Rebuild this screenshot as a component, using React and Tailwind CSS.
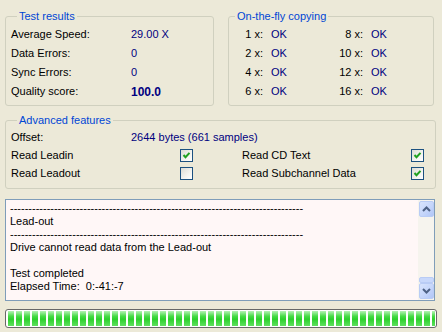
import React from 'react';

const Check = ({ checked }) => (
  <div className="w-[13px] h-[13px] border border-[#1C5180] bg-[linear-gradient(135deg,#DCDCD5_0%,#F4F4F0_60%,#FFFFFF_100%)] flex items-center justify-center">
    {checked && (
      <svg width="9" height="9" viewBox="0 0 9 9">
        <path d="M1.5 4 L3.5 6.2 L7.5 1.8" fill="none" stroke="#21A121" strokeWidth="2" />
      </svg>
    )}
  </div>
);

const GroupBox = ({ title, className, children }) => (
  <fieldset className={`border border-[#D0D0BF] rounded-[3px] ${className}`}>
    <legend className="ml-[6px] px-[2px] text-[#0046D5] leading-[13px]">{title}</legend>
    {children}
  </fieldset>
);

const ScrollBtn = ({ up }) => (
  <div className="w-[15px] h-[16px] rounded-[2px] border border-[#B9CCF5] bg-[linear-gradient(135deg,#D8E4FD_0%,#C3D4FA_60%,#B0C6F7_100%)] flex items-center justify-center">
    <svg width="9" height="6" viewBox="0 0 9 6">
      <path d={up ? 'M1 5 L4.5 1.5 L8 5' : 'M1 1 L4.5 4.5 L8 1'} fill="none" stroke="#4D6185" strokeWidth="2" />
    </svg>
  </div>
);

export default function App() {
  const speeds = [['1', '8'], ['2', '10'], ['4', '12'], ['6', '16']];
  const results = [
    ['Average Speed:', '29.00 X', false],
    ['Data Errors:', '0', false],
    ['Sync Errors:', '0', false],
    ['Quality score:', '100.0', true],
  ];
  const dashes = '-'.repeat(80);

  return (
    <div className="w-[442px] h-[332px] bg-[#ECE9D8] px-[5px] pt-[10px] text-[11px] text-black overflow-hidden" style={{ fontFamily: '"Liberation Sans", Arial, sans-serif' }}>
      <div className="flex">
        <GroupBox title="Test results" className="w-[209px] h-[96px] pl-[5px]">
          <div className="pt-[2px]">
            {results.map(([label, value, bold]) => (
              <div key={label} className="flex items-center h-[19px]">
                <span className="w-[120px]">{label}</span>
                <span className={`text-[#000080] ${bold ? 'font-bold text-[12px]' : ''}`}>{value}</span>
              </div>
            ))}
          </div>
        </GroupBox>
        <GroupBox title="On-the-fly copying" className="ml-[14px] w-[206px] h-[96px]">
          <div className="pt-[2px]">
            {speeds.map(([a, b]) => (
              <div key={a} className="flex items-center h-[19px]">
                <span className="w-[34px] text-right">{a} x:</span>
                <span className="ml-[8px] w-[52px] text-[#000080]">OK</span>
                <span className="w-[40px] text-right">{b} x:</span>
                <span className="ml-[8px] text-[#000080]">OK</span>
              </div>
            ))}
          </div>
        </GroupBox>
      </div>

      <GroupBox title="Advanced features" className="mt-[8px] w-[431px] h-[75px] pl-[5px]">
        <div className="pt-[1px]">
          <div className="flex items-center h-[18px]">
            <span className="w-[120px]">Offset:</span>
            <span className="text-[#000080]">2644 bytes (661 samples)</span>
          </div>
          <div className="flex items-center h-[18px]">
            <span className="w-[169px]">Read Leadin</span>
            <Check checked />
            <span className="ml-[49px] w-[169px]">Read CD Text</span>
            <Check checked />
          </div>
          <div className="flex items-center h-[18px]">
            <span className="w-[169px]">Read Leadout</span>
            <Check />
            <span className="ml-[49px] w-[169px]">Read Subchannel Data</span>
            <Check checked />
          </div>
        </div>
      </GroupBox>

      <div className="mt-[10px] w-[430px] h-[102px] border border-[#7F9DB9] bg-[#FFF7F7] flex">
        <div className="flex-1 pl-[4px] pt-[2px] leading-[13px]">
          <div className="whitespace-nowrap">{dashes}</div>
          <div>Lead-out</div>
          <div className="whitespace-nowrap">{dashes}</div>
          <div>Drive cannot read data from the Lead-out</div>
          <div className="h-[13px]"></div>
          <div>Test completed</div>
          <div className="whitespace-pre">Elapsed Time:  0:-41:-7</div>
        </div>
        <div className="w-[16px] bg-[#F6F4EE] flex flex-col items-end pt-[1px] pb-[1px]">
          <ScrollBtn up />
          <div className="flex-1 w-[15px] flex flex-col justify-end">
            <div className="h-[6px] rounded-[2px] border border-[#B9CCF5] bg-[#C8D8FB]"></div>
          </div>
          <ScrollBtn />
        </div>
      </div>

      <div className="mt-[8px] w-[432px] h-[19px] border border-[#686868] rounded-[3px] bg-white p-[1px] pl-[2px] overflow-hidden">
        <div className="flex gap-[2px] h-full overflow-hidden">
          {Array.from({ length: 54 }).map((_, i) => (
            <div key={i} className="shrink-0 w-[6px] h-full bg-[linear-gradient(to_bottom,#B6F2B6_0%,#46DB46_35%,#2CD02C_55%,#5FE05F_100%)]"></div>
          ))}
        </div>
      </div>
    </div>
  );
}
